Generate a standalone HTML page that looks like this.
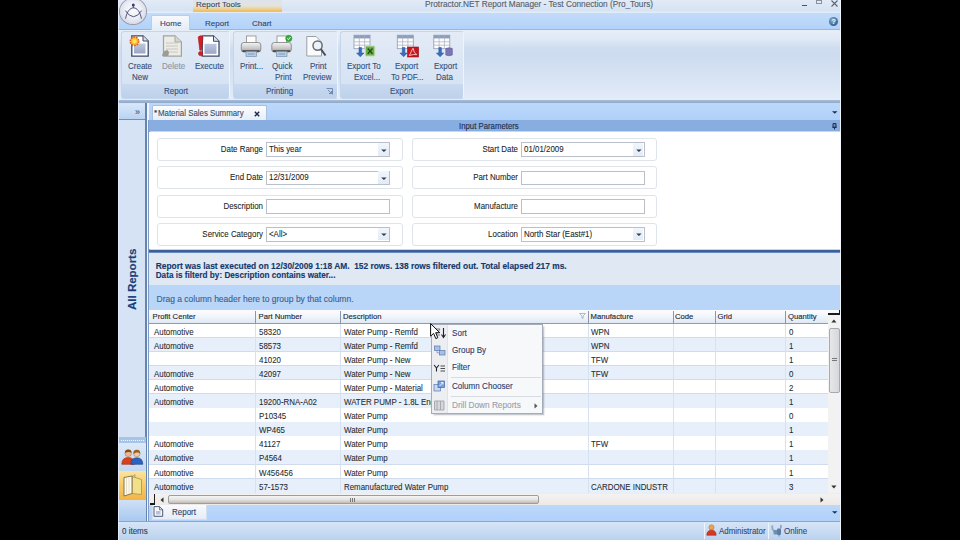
<!DOCTYPE html>
<html><head><meta charset="utf-8">
<style>
*{margin:0;padding:0;box-sizing:border-box}
html,body{width:960px;height:540px;overflow:hidden;background:#000}
body{position:relative;font-family:"Liberation Sans",sans-serif;font-size:8px;color:#1e2a3c}
.a{position:absolute}
.t{position:absolute;white-space:nowrap;line-height:1;-webkit-text-stroke:.12px currentColor}
#win{position:absolute;left:118px;top:0;width:723px;height:540px;background:#c4d8f2;overflow:hidden}
</style></head><body>
<div id="win">
  <!-- title bar -->
  <div class="a" style="left:0;top:0;width:723px;height:13px;background:linear-gradient(#e2ebf6,#d6e3f3 80%,#e6eef8)"></div>
  <!-- tab row -->
  <div class="a" style="left:0;top:13px;width:723px;height:17px;background:linear-gradient(#c2dbf9,#b2d2f9)"></div>
  <div class="a" style="left:0;top:29px;width:723px;height:1px;background:#99b6dc"></div>

  <!-- logo -->
  <div class="a" style="left:2px;top:-1.5px;width:25.5px;height:25.5px;border-radius:50%;background:radial-gradient(circle at 50% 45%,#fbfbfe 0,#eceef6 45%,#d2d5e2 80%,#b4b8c6 100%);box-shadow:0 0 0 1px #959aa6"></div>
  <svg class="a" style="left:0;top:0" width="32" height="28" viewBox="0 0 32 28"><circle cx="15.3" cy="5" r="1.5" fill="#3b3f66"/><path d="M15.3 5.5 V8.2 M7.6 18.7 C10 4.2 21 4.2 23.4 18.7 M7.3 10.6 Q15.5 22.8 23.7 10.6" stroke="#484b74" stroke-width="0.95" fill="none"/></svg>
  <!-- report tools contextual -->
  <div class="a" style="left:75px;top:0;width:89px;height:12px;background:linear-gradient(#dde3ea 0,#e2e4e2 45%,#ead8b0 65%,#f2c56c 85%,#eebc58 100%)"></div>
  <div class="t" style="left:78px;top:1px;font-size:8px;color:#3a475a">Report Tools</div>
  <div class="t" style="left:307px;top:1px;font-size:8.25px;color:#56606e">Protractor.NET Report Manager - Test Connection (Pro_Tours)</div>
  <!-- window controls -->
  <div class="a" style="left:684px;top:5px;width:5px;height:1.2px;background:#4a5264"></div>
  <div class="a" style="left:698px;top:0px;width:6px;height:4px;border:1px solid #8a909c;border-top-width:1.5px;background:#e6ecf4"></div>
  <svg class="a" style="left:713px;top:0px" width="7" height="7" viewBox="0 0 7 7"><path d="M0.5 0.5 L6.5 6.5 M6.5 0.5 L0.5 6.5" stroke="#5c6472" stroke-width="1.1"/></svg>
  <!-- tabs -->
  <div class="a" style="left:33px;top:15px;width:39px;height:15px;background:linear-gradient(#f6f9fd,#e4ecf6);border:1px solid #b8cde8;border-bottom:none;border-radius:2px 2px 0 0"></div>
  <div class="t" style="left:42px;top:19.5px;color:#314870">Home</div>
  <div class="t" style="left:87px;top:19.5px;color:#314870">Report</div>
  <div class="t" style="left:134px;top:19.5px;color:#314870">Chart</div>
  <div class="a" style="left:711px;top:17px;width:9px;height:9px;border-radius:50%;background:radial-gradient(circle at 40% 35%,#8ab0d4,#3a6896 65%,#2a5078)"></div>
  <div class="t" style="left:713.5px;top:18px;font-size:7px;font-weight:bold;color:#e8f0f8">?</div>
  <!-- ribbon -->
  <div class="a" style="left:0;top:30px;width:723px;height:71px;background:linear-gradient(#e6eef8 0,#e0e9f5 9px,#d0ddf0 18px,#cedcf0 35%,#d8e4f4 70%,#e4edf8 100%)"></div>
  <div class="a" style="left:0;top:100px;width:723px;height:3px;background:linear-gradient(#a8bcd6,#8ea9cc)"></div>
  <div class="a" style="left:3px;top:31px;width:109px;height:68px;border:1px solid #c5d5ea;border-right-color:#eef4fb;border-radius:3px;background:linear-gradient(#e3ebf6,#d9e5f4 60%,#d3e1f2)"></div>
  <div class="a" style="left:4px;top:84px;width:107px;height:14px;background:linear-gradient(#c9daf0,#bcd1ec);border-radius:0 0 2px 2px"></div>
  <div class="t" style="left:45.5px;top:86.92px;font-size:8.8px;transform:scaleX(.91);transform-origin:0 0;color:#34507a">Report</div>
  <div class="a" style="left:115px;top:31px;width:105px;height:68px;border:1px solid #c5d5ea;border-right-color:#eef4fb;border-radius:3px;background:linear-gradient(#e3ebf6,#d9e5f4 60%,#d3e1f2)"></div>
  <div class="a" style="left:116px;top:84px;width:103px;height:14px;background:linear-gradient(#c9daf0,#bcd1ec);border-radius:0 0 2px 2px"></div>
  <div class="t" style="left:148px;top:86.92px;font-size:8.8px;transform:scaleX(.91);transform-origin:0 0;color:#34507a">Printing</div>
  <div class="a" style="left:222px;top:31px;width:124px;height:68px;border:1px solid #c5d5ea;border-right-color:#eef4fb;border-radius:3px;background:linear-gradient(#e3ebf6,#d9e5f4 60%,#d3e1f2)"></div>
  <div class="a" style="left:223px;top:84px;width:122px;height:14px;background:linear-gradient(#c9daf0,#bcd1ec);border-radius:0 0 2px 2px"></div>
  <div class="t" style="left:272px;top:86.92px;font-size:8.8px;transform:scaleX(.91);transform-origin:0 0;color:#34507a">Export</div>
  <div class="t" style="left:10px;top:62.42px;font-size:8.8px;transform:scaleX(.91);transform-origin:0 0;color:#34507a">Create</div>
  <div class="t" style="left:14px;top:73.42px;font-size:8.8px;transform:scaleX(.91);transform-origin:0 0;color:#34507a">New</div>
  <div class="t" style="left:43.5px;top:62.42px;font-size:8.8px;transform:scaleX(.91);transform-origin:0 0;color:#8d96a4">Delete</div>
  <div class="t" style="left:76.5px;top:62.42px;font-size:8.8px;transform:scaleX(.91);transform-origin:0 0;color:#34507a">Execute</div>
  <div class="t" style="left:122px;top:62.42px;font-size:8.8px;transform:scaleX(.91);transform-origin:0 0;color:#34507a">Print...</div>
  <div class="t" style="left:154px;top:62.42px;font-size:8.8px;transform:scaleX(.91);transform-origin:0 0;color:#34507a">Quick</div>
  <div class="t" style="left:157px;top:73.42px;font-size:8.8px;transform:scaleX(.91);transform-origin:0 0;color:#34507a">Print</div>
  <div class="t" style="left:192px;top:62.42px;font-size:8.8px;transform:scaleX(.91);transform-origin:0 0;color:#34507a">Print</div>
  <div class="t" style="left:185px;top:73.42px;font-size:8.8px;transform:scaleX(.91);transform-origin:0 0;color:#34507a">Preview</div>
  <div class="t" style="left:229px;top:62.42px;font-size:8.8px;transform:scaleX(.91);transform-origin:0 0;color:#34507a">Export To</div>
  <div class="t" style="left:236px;top:73.42px;font-size:8.8px;transform:scaleX(.91);transform-origin:0 0;color:#34507a">Excel...</div>
  <div class="t" style="left:277px;top:62.42px;font-size:8.8px;transform:scaleX(.91);transform-origin:0 0;color:#34507a">Export</div>
  <div class="t" style="left:273px;top:73.42px;font-size:8.8px;transform:scaleX(.91);transform-origin:0 0;color:#34507a">To PDF...</div>
  <div class="t" style="left:315.5px;top:62.42px;font-size:8.8px;transform:scaleX(.91);transform-origin:0 0;color:#34507a">Export</div>
  <div class="t" style="left:318px;top:73.42px;font-size:8.8px;transform:scaleX(.91);transform-origin:0 0;color:#34507a">Data</div>
  <svg class="a" style="left:208px;top:88px" width="7" height="7"><path d="M0.5 0.5 H6.5 V6.5 M2 2 L5.5 5.5 M5.5 3 V5.5 H3" stroke="#6a82a6" stroke-width="0.9" fill="none"/></svg>
  <!-- ribbon icons -->
  <svg class="a" style="left:0;top:0" width="723" height="100" viewBox="0 0 723 100">
    <defs>
      <linearGradient id="prn" x1="0" y1="0" x2="0" y2="1"><stop offset="0" stop-color="#f4f4f4"/><stop offset="0.6" stop-color="#c9c9c9"/><stop offset="1" stop-color="#9a9a9a"/></linearGradient>
      <linearGradient id="inner" x1="0" y1="0" x2="0" y2="1"><stop offset="0" stop-color="#c0c8e0"/><stop offset="1" stop-color="#9aa6c8"/></linearGradient>
    </defs>
    <!-- create new -->
    <path d="M13.8 35.8 H25 L30.2 41 V56.2 H13.8 Z" fill="#fff" stroke="#3e4a64" stroke-width="1.3"/>
    <path d="M25 35.8 V41 H30.2" fill="#d8deea" stroke="#3e4a64" stroke-width="1"/>
    <rect x="16" y="43.5" width="11.5" height="10" fill="url(#inner)"/>
    <circle cx="16.5" cy="41.3" r="4.2" fill="#f6c22a" stroke="#e0601c" stroke-width="1.6" stroke-dasharray="1.6 1"/>
    <circle cx="16.5" cy="41.3" r="2" fill="#ffe060"/>
    <!-- delete -->
    <path d="M45.5 35.8 H57 L63.4 42 V56.2 H45.5 Z" fill="#ecebe6" stroke="#a3a39c" stroke-width="1.2"/>
    <path d="M57 35.8 V42 H63.4" fill="#d6d5cf" stroke="#a3a39c" stroke-width="0.9"/>
    <path d="M48 43 H60 M48 46 H60 M48 49 H60 M48 52 H60" stroke="#c4c3bc" stroke-width="0.9"/>
    <path d="M44 56 Q45 50 49.5 50 Q52 52 50 56 Z" fill="#9c9c94"/>
    <!-- execute -->
    <path d="M84.3 35.8 H95.5 L101 41.3 V56.2 H84.3 Z" fill="#fff" stroke="#3e4a64" stroke-width="1.3"/>
    <path d="M95.5 35.8 V41.3 H101" fill="#d8deea" stroke="#3e4a64" stroke-width="1"/>
    <rect x="86.5" y="43.8" width="12" height="10" fill="url(#inner)"/>
    <path d="M80.2 37 Q82.5 34.5 85 37 L83.4 50.2 H81.8 Z" fill="#d81e22" stroke="#a8141a" stroke-width="0.6"/>
    <circle cx="82.6" cy="53.6" r="2.1" fill="#d81e22" stroke="#a8141a" stroke-width="0.6"/>
    <!-- print -->
    <g id="printer">
    <rect x="128.5" y="36" width="9.5" height="8" fill="#fdfdfd" stroke="#8c8c8c" stroke-width="0.8"/>
    <rect x="123.3" y="42.5" width="19.5" height="9.5" rx="2.5" fill="url(#prn)" stroke="#7c7c7c" stroke-width="0.8"/>
    <rect x="124.5" y="50.2" width="17" height="1.8" fill="#4a4a4a"/>
    <rect x="128" y="51.5" width="10.5" height="5" fill="#b4cce4" stroke="#7890b0" stroke-width="0.7"/>
    <path d="M130 54 H136.5" stroke="#6c88ac" stroke-width="0.7"/>
    </g>
    <use href="#printer" x="30.5"/>
    <circle cx="170.8" cy="38.4" r="3.1" fill="#3aa83e" stroke="#2b8a2e" stroke-width="0.6"/>
    <path d="M169.2 38.4 L170.5 39.7 L172.5 37" stroke="#fff" stroke-width="0.9" fill="none"/>
    <!-- print preview -->
    <path d="M188.8 36.5 H198 L203.5 42 V56 H188.8 Z" fill="#fbfbfc" stroke="#9aa0a8" stroke-width="1"/>
    <circle cx="199.6" cy="45.6" r="4.6" fill="#e4edf6" fill-opacity="0.6" stroke="#6a7078" stroke-width="1.5"/>
    <path d="M202.8 49 L207.5 55.5" stroke="#4a5058" stroke-width="2.1"/>
    <!-- export grids -->
    <g id="grid">
    <rect x="236" y="35.2" width="16" height="13.5" fill="#fdfdfd" stroke="#8c9ab4" stroke-width="0.8"/>
    <rect x="236" y="35.2" width="16" height="3.2" fill="#8f9db9"/>
    <path d="M236 41.8 H252 M236 45.2 H252 M241.3 35.2 V48.7 M246.6 35.2 V48.7" stroke="#a4aec4" stroke-width="0.7"/>
    <path d="M241 47.5 V53 H238.6 L242.3 56.8 L246 53 H243.6 V47.5 Z" fill="#3a6cc0" stroke="#26509a" stroke-width="0.5"/>
    </g>
    <rect x="247.3" y="46" width="9.5" height="10" rx="1" fill="#6fae4a" stroke="#bfe0a8" stroke-width="1"/>
    <path d="M249.8 48.5 L254.5 53.8 M254.5 48.5 L249.8 53.8" stroke="#1f4f1a" stroke-width="1.4"/>
    <use href="#grid" x="43.3"/>
    <rect x="289.6" y="47" width="11" height="10" fill="#c8161c" stroke="#901014" stroke-width="0.6"/>
    <path d="M291.3 55.5 Q293.5 51.5 294.6 48.6 Q295.3 47.6 295.4 49 Q295 52 298.8 54.6 Q296 54 291.3 55.5" fill="none" stroke="#fbe0e0" stroke-width="0.8"/>
    <use href="#grid" x="79.8"/>
    <path d="M327.8 48.5 Q331 47 334.3 48.5 V55 Q331 56.5 327.8 55 Z" fill="#7d76b4" stroke="#5a5490" stroke-width="0.6"/>
  </svg>
  <!-- tab strip -->
  <div class="a" style="left:31px;top:103px;width:692px;height:17px;background:linear-gradient(#bcd8fb,#b0d0f8)"></div>
  <!-- nav pane -->
  <div class="a" style="left:1px;top:103px;width:27px;height:418px;background:#d5e3f4"></div>
  <div class="a" style="left:1px;top:103.5px;width:27px;height:16.5px;background:linear-gradient(#d8e7f9,#b9d3f3);border-bottom:1.3px solid #7290bc"></div>
  <div class="a" style="left:27.2px;top:103px;width:1.6px;height:418px;background:#6584b0"></div>
  <div class="a" style="left:29px;top:103px;width:1.5px;height:418px;background:#f0f5fb"></div><div class="a" style="left:30.3px;top:120px;width:1.3px;height:401px;background:#7f9cc6"></div>
  <!-- input parameters header -->
  <div class="a" style="left:31px;top:120.2px;width:692px;height:11px;background:#88ade0"></div>
  <!-- form -->
  <div class="a" style="left:31px;top:132px;width:692px;height:117px;background:#fff"></div>
  <div class="a" style="left:31px;top:249.5px;width:692px;height:4.3px;background:linear-gradient(#3e6098 0,#3e6098 1.7px,#6a8cc0 2px,#5a7eb6 4.3px)"></div>
  <!-- report info -->
  <div class="a" style="left:31px;top:253px;width:692px;height:32px;background:#dfe8f3"></div>
  <!-- group by -->
  <div class="a" style="left:31px;top:285px;width:692px;height:25px;background:#b9d6f9"></div>
  <!-- grid header -->
  <div class="a" style="left:31px;top:309.5px;width:679px;height:14px;background:linear-gradient(#fbfcfe,#f1f5fa 50%,#dfe8f4);border-bottom:1px solid #8a9bb4"></div>
  <div class="a" style="left:31px;top:323.50px;width:679px;height:14.1px;background:#ffffff"></div>
  <div class="a" style="left:31px;top:337.00px;width:679px;height:1.8px;background:#d0dcec"></div>
  <div class="a" style="left:31px;top:337.60px;width:679px;height:14.1px;background:#e7effa"></div>
  <div class="a" style="left:31px;top:351.10px;width:679px;height:1.8px;background:#d0dcec"></div>
  <div class="a" style="left:31px;top:351.70px;width:679px;height:14.1px;background:#ffffff"></div>
  <div class="a" style="left:31px;top:365.20px;width:679px;height:1.8px;background:#d0dcec"></div>
  <div class="a" style="left:31px;top:365.80px;width:679px;height:14.1px;background:#e7effa"></div>
  <div class="a" style="left:31px;top:379.30px;width:679px;height:1.8px;background:#d0dcec"></div>
  <div class="a" style="left:31px;top:379.90px;width:679px;height:14.1px;background:#ffffff"></div>
  <div class="a" style="left:31px;top:393.40px;width:679px;height:1.8px;background:#d0dcec"></div>
  <div class="a" style="left:31px;top:394.00px;width:679px;height:14.1px;background:#e7effa"></div>
  <div class="a" style="left:31px;top:407.50px;width:679px;height:1.8px;background:#d0dcec"></div>
  <div class="a" style="left:31px;top:408.10px;width:679px;height:14.1px;background:#ffffff"></div>
  <div class="a" style="left:31px;top:421.60px;width:679px;height:1.8px;background:#d0dcec"></div>
  <div class="a" style="left:31px;top:422.20px;width:679px;height:14.1px;background:#e7effa"></div>
  <div class="a" style="left:31px;top:435.70px;width:679px;height:1.8px;background:#d0dcec"></div>
  <div class="a" style="left:31px;top:436.30px;width:679px;height:14.1px;background:#ffffff"></div>
  <div class="a" style="left:31px;top:449.80px;width:679px;height:1.8px;background:#d0dcec"></div>
  <div class="a" style="left:31px;top:450.40px;width:679px;height:14.1px;background:#e7effa"></div>
  <div class="a" style="left:31px;top:463.90px;width:679px;height:1.8px;background:#d0dcec"></div>
  <div class="a" style="left:31px;top:464.50px;width:679px;height:14.1px;background:#ffffff"></div>
  <div class="a" style="left:31px;top:478.00px;width:679px;height:1.8px;background:#d0dcec"></div>
  <div class="a" style="left:31px;top:478.60px;width:679px;height:14.1px;background:#e7effa"></div>
  
  <div class="a" style="left:137.2px;top:323.5px;width:1px;height:170px;background:#d6e2f2"></div>
  <div class="a" style="left:137.2px;top:311px;width:1px;height:12.5px;background:#8897ad"></div>
  <div class="a" style="left:222.1px;top:323.5px;width:1px;height:170px;background:#d6e2f2"></div>
  <div class="a" style="left:222.1px;top:311px;width:1px;height:12.5px;background:#8897ad"></div>
  <div class="a" style="left:469.5px;top:323.5px;width:1px;height:170px;background:#d6e2f2"></div>
  <div class="a" style="left:469.5px;top:311px;width:1px;height:12.5px;background:#8897ad"></div>
  <div class="a" style="left:554.5px;top:323.5px;width:1px;height:170px;background:#d6e2f2"></div>
  <div class="a" style="left:554.5px;top:311px;width:1px;height:12.5px;background:#8897ad"></div>
  <div class="a" style="left:596.7px;top:323.5px;width:1px;height:170px;background:#d6e2f2"></div>
  <div class="a" style="left:596.7px;top:311px;width:1px;height:12.5px;background:#8897ad"></div>
  <div class="a" style="left:667px;top:323.5px;width:1px;height:170px;background:#d6e2f2"></div>
  <div class="a" style="left:667px;top:311px;width:1px;height:12.5px;background:#8897ad"></div>
  <div class="t" style="left:34.5px;top:313px;font-size:7.7px;color:#1e2530">Profit Center</div>
  <div class="t" style="left:140.5px;top:313px;font-size:7.7px;color:#1e2530">Part Number</div>
  <div class="t" style="left:225px;top:313px;font-size:7.7px;color:#1e2530">Description</div>
  <div class="t" style="left:472.5px;top:313px;font-size:7.7px;color:#1e2530">Manufacture</div>
  <div class="t" style="left:557px;top:313px;font-size:7.7px;color:#1e2530">Code</div>
  <div class="t" style="left:599.5px;top:313px;font-size:7.7px;color:#1e2530">Grid</div>
  <div class="t" style="left:670px;top:313px;font-size:7.7px;color:#1e2530">Quantity</div>
  <svg class="a" style="left:461px;top:313px" width="7" height="6"><path d="M0.5 0.5 H6.5 L4 3 V5.5 L3 5 V3 Z" fill="none" stroke="#a0a8b4" stroke-width="0.8"/></svg>
  <div class="t" style="left:36px;top:327.50px;font-size:8.6px;transform:scaleX(.92);-webkit-text-stroke:.08px currentColor;transform-origin:0 0;color:#262a30">Automotive</div>
  <div class="t" style="left:141.4px;top:327.50px;font-size:8.6px;transform:scaleX(.92);-webkit-text-stroke:.08px currentColor;transform-origin:0 0;color:#262a30">58320</div>
  <div class="t" style="left:225.75px;top:327.50px;font-size:8.6px;transform:scaleX(.92);-webkit-text-stroke:.08px currentColor;transform-origin:0 0;color:#262a30">Water Pump - Remfd</div>
  <div class="t" style="left:473px;top:327.50px;font-size:8.6px;transform:scaleX(.92);-webkit-text-stroke:.08px currentColor;transform-origin:0 0;color:#262a30">WPN</div>
  <div class="t" style="left:671px;top:327.50px;font-size:8.6px;transform:scaleX(.92);-webkit-text-stroke:.08px currentColor;transform-origin:0 0;color:#262a30">0</div>
  <div class="t" style="left:36px;top:341.60px;font-size:8.6px;transform:scaleX(.92);-webkit-text-stroke:.08px currentColor;transform-origin:0 0;color:#262a30">Automotive</div>
  <div class="t" style="left:141.4px;top:341.60px;font-size:8.6px;transform:scaleX(.92);-webkit-text-stroke:.08px currentColor;transform-origin:0 0;color:#262a30">58573</div>
  <div class="t" style="left:225.75px;top:341.60px;font-size:8.6px;transform:scaleX(.92);-webkit-text-stroke:.08px currentColor;transform-origin:0 0;color:#262a30">Water Pump - Remfd</div>
  <div class="t" style="left:473px;top:341.60px;font-size:8.6px;transform:scaleX(.92);-webkit-text-stroke:.08px currentColor;transform-origin:0 0;color:#262a30">WPN</div>
  <div class="t" style="left:671px;top:341.60px;font-size:8.6px;transform:scaleX(.92);-webkit-text-stroke:.08px currentColor;transform-origin:0 0;color:#262a30">1</div>
  <div class="t" style="left:141.4px;top:355.70px;font-size:8.6px;transform:scaleX(.92);-webkit-text-stroke:.08px currentColor;transform-origin:0 0;color:#262a30">41020</div>
  <div class="t" style="left:225.75px;top:355.70px;font-size:8.6px;transform:scaleX(.92);-webkit-text-stroke:.08px currentColor;transform-origin:0 0;color:#262a30">Water Pump - New</div>
  <div class="t" style="left:473px;top:355.70px;font-size:8.6px;transform:scaleX(.92);-webkit-text-stroke:.08px currentColor;transform-origin:0 0;color:#262a30">TFW</div>
  <div class="t" style="left:671px;top:355.70px;font-size:8.6px;transform:scaleX(.92);-webkit-text-stroke:.08px currentColor;transform-origin:0 0;color:#262a30">1</div>
  <div class="t" style="left:36px;top:369.80px;font-size:8.6px;transform:scaleX(.92);-webkit-text-stroke:.08px currentColor;transform-origin:0 0;color:#262a30">Automotive</div>
  <div class="t" style="left:141.4px;top:369.80px;font-size:8.6px;transform:scaleX(.92);-webkit-text-stroke:.08px currentColor;transform-origin:0 0;color:#262a30">42097</div>
  <div class="t" style="left:225.75px;top:369.80px;font-size:8.6px;transform:scaleX(.92);-webkit-text-stroke:.08px currentColor;transform-origin:0 0;color:#262a30">Water Pump - New</div>
  <div class="t" style="left:473px;top:369.80px;font-size:8.6px;transform:scaleX(.92);-webkit-text-stroke:.08px currentColor;transform-origin:0 0;color:#262a30">TFW</div>
  <div class="t" style="left:671px;top:369.80px;font-size:8.6px;transform:scaleX(.92);-webkit-text-stroke:.08px currentColor;transform-origin:0 0;color:#262a30">0</div>
  <div class="t" style="left:36px;top:383.90px;font-size:8.6px;transform:scaleX(.92);-webkit-text-stroke:.08px currentColor;transform-origin:0 0;color:#262a30">Automotive</div>
  <div class="t" style="left:225.75px;top:383.90px;font-size:8.6px;transform:scaleX(.92);-webkit-text-stroke:.08px currentColor;transform-origin:0 0;color:#262a30">Water Pump - Material</div>
  <div class="t" style="left:671px;top:383.90px;font-size:8.6px;transform:scaleX(.92);-webkit-text-stroke:.08px currentColor;transform-origin:0 0;color:#262a30">2</div>
  <div class="t" style="left:36px;top:398.00px;font-size:8.6px;transform:scaleX(.92);-webkit-text-stroke:.08px currentColor;transform-origin:0 0;color:#262a30">Automotive</div>
  <div class="t" style="left:141.4px;top:398.00px;font-size:8.6px;transform:scaleX(.92);-webkit-text-stroke:.08px currentColor;transform-origin:0 0;color:#262a30">19200-RNA-A02</div>
  <div class="t" style="left:225.75px;top:398.00px;font-size:8.6px;transform:scaleX(.92);-webkit-text-stroke:.08px currentColor;transform-origin:0 0;color:#262a30">WATER PUMP - 1.8L Engine</div>
  <div class="t" style="left:671px;top:398.00px;font-size:8.6px;transform:scaleX(.92);-webkit-text-stroke:.08px currentColor;transform-origin:0 0;color:#262a30">1</div>
  <div class="t" style="left:141.4px;top:412.10px;font-size:8.6px;transform:scaleX(.92);-webkit-text-stroke:.08px currentColor;transform-origin:0 0;color:#262a30">P10345</div>
  <div class="t" style="left:225.75px;top:412.10px;font-size:8.6px;transform:scaleX(.92);-webkit-text-stroke:.08px currentColor;transform-origin:0 0;color:#262a30">Water Pump</div>
  <div class="t" style="left:671px;top:412.10px;font-size:8.6px;transform:scaleX(.92);-webkit-text-stroke:.08px currentColor;transform-origin:0 0;color:#262a30">0</div>
  <div class="t" style="left:141.4px;top:426.20px;font-size:8.6px;transform:scaleX(.92);-webkit-text-stroke:.08px currentColor;transform-origin:0 0;color:#262a30">WP465</div>
  <div class="t" style="left:225.75px;top:426.20px;font-size:8.6px;transform:scaleX(.92);-webkit-text-stroke:.08px currentColor;transform-origin:0 0;color:#262a30">Water Pump</div>
  <div class="t" style="left:671px;top:426.20px;font-size:8.6px;transform:scaleX(.92);-webkit-text-stroke:.08px currentColor;transform-origin:0 0;color:#262a30">1</div>
  <div class="t" style="left:36px;top:440.30px;font-size:8.6px;transform:scaleX(.92);-webkit-text-stroke:.08px currentColor;transform-origin:0 0;color:#262a30">Automotive</div>
  <div class="t" style="left:141.4px;top:440.30px;font-size:8.6px;transform:scaleX(.92);-webkit-text-stroke:.08px currentColor;transform-origin:0 0;color:#262a30">41127</div>
  <div class="t" style="left:225.75px;top:440.30px;font-size:8.6px;transform:scaleX(.92);-webkit-text-stroke:.08px currentColor;transform-origin:0 0;color:#262a30">Water Pump</div>
  <div class="t" style="left:473px;top:440.30px;font-size:8.6px;transform:scaleX(.92);-webkit-text-stroke:.08px currentColor;transform-origin:0 0;color:#262a30">TFW</div>
  <div class="t" style="left:671px;top:440.30px;font-size:8.6px;transform:scaleX(.92);-webkit-text-stroke:.08px currentColor;transform-origin:0 0;color:#262a30">1</div>
  <div class="t" style="left:36px;top:454.40px;font-size:8.6px;transform:scaleX(.92);-webkit-text-stroke:.08px currentColor;transform-origin:0 0;color:#262a30">Automotive</div>
  <div class="t" style="left:141.4px;top:454.40px;font-size:8.6px;transform:scaleX(.92);-webkit-text-stroke:.08px currentColor;transform-origin:0 0;color:#262a30">P4564</div>
  <div class="t" style="left:225.75px;top:454.40px;font-size:8.6px;transform:scaleX(.92);-webkit-text-stroke:.08px currentColor;transform-origin:0 0;color:#262a30">Water Pump</div>
  <div class="t" style="left:671px;top:454.40px;font-size:8.6px;transform:scaleX(.92);-webkit-text-stroke:.08px currentColor;transform-origin:0 0;color:#262a30">1</div>
  <div class="t" style="left:36px;top:468.50px;font-size:8.6px;transform:scaleX(.92);-webkit-text-stroke:.08px currentColor;transform-origin:0 0;color:#262a30">Automotive</div>
  <div class="t" style="left:141.4px;top:468.50px;font-size:8.6px;transform:scaleX(.92);-webkit-text-stroke:.08px currentColor;transform-origin:0 0;color:#262a30">W456456</div>
  <div class="t" style="left:225.75px;top:468.50px;font-size:8.6px;transform:scaleX(.92);-webkit-text-stroke:.08px currentColor;transform-origin:0 0;color:#262a30">Water Pump</div>
  <div class="t" style="left:671px;top:468.50px;font-size:8.6px;transform:scaleX(.92);-webkit-text-stroke:.08px currentColor;transform-origin:0 0;color:#262a30">1</div>
  <div class="t" style="left:36px;top:482.60px;font-size:8.6px;transform:scaleX(.92);-webkit-text-stroke:.08px currentColor;transform-origin:0 0;color:#262a30">Automotive</div>
  <div class="t" style="left:141.4px;top:482.60px;font-size:8.6px;transform:scaleX(.92);-webkit-text-stroke:.08px currentColor;transform-origin:0 0;color:#262a30">57-1573</div>
  <div class="t" style="left:225.75px;top:482.60px;font-size:8.6px;transform:scaleX(.92);-webkit-text-stroke:.08px currentColor;transform-origin:0 0;color:#262a30">Remanufactured Water Pump</div>
  <div class="t" style="left:473px;top:482.60px;font-size:8.6px;transform:scaleX(.92);-webkit-text-stroke:.08px currentColor;transform-origin:0 0;color:#262a30">CARDONE INDUSTR</div>
  <div class="t" style="left:671px;top:482.60px;font-size:8.6px;transform:scaleX(.92);-webkit-text-stroke:.08px currentColor;transform-origin:0 0;color:#262a30">3</div>
  <!-- v scrollbar -->
  <div class="a" style="left:710px;top:314px;width:13px;height:179.5px;background:#f2f2f3"></div>
  <div class="a" style="left:710px;top:309.5px;width:13px;height:4.5px;background:linear-gradient(#fbfcfe,#f1f5fa)"></div>
  <div class="a" style="left:710px;top:313.4px;width:12px;height:1.3px;background:#1a1a1a"></div>
  <div class="a" style="left:720.6px;top:310.2px;width:1.3px;height:4.5px;background:#1a1a1a"></div>
  <svg class="a" style="left:713px;top:319px" width="6" height="4"><path d="M0.3 3.5 H5.5 L2.9 0.5 Z" fill="#333"/></svg>
  <div class="a" style="left:711px;top:327.5px;width:10.5px;height:65.5px;border:1px solid #a6a9ae;border-radius:2px;background:linear-gradient(90deg,#e6e7e9,#d5d7da)"></div>
  <div class="a" style="left:714px;top:357.5px;width:4.5px;height:4.8px;background:repeating-linear-gradient(#777 0,#777 0.8px,transparent 0.8px,transparent 2px)"></div>
  <svg class="a" style="left:713px;top:485px" width="6" height="4"><path d="M0.3 0.5 H5.5 L2.9 3.5 Z" fill="#333"/></svg>
  <!-- h scrollbar -->
  <div class="a" style="left:31px;top:493px;width:692px;height:12px;background:linear-gradient(#e8ebef 0,#f4f2f0 1.5px,#ece9e6)"></div>
  <div class="a" style="left:35.8px;top:493.5px;width:1.3px;height:11px;background:#1a1a1a"></div>
  <div class="a" style="left:32px;top:503.3px;width:5px;height:1.3px;background:#1a1a1a"></div>
  <svg class="a" style="left:41.5px;top:497px" width="4" height="6"><path d="M3.5 0.3 V5.5 L0.5 2.9 Z" fill="#333"/></svg>
  <div class="a" style="left:49.7px;top:494.6px;width:371px;height:9.8px;border:1px solid #9a9da2;border-radius:2px;background:linear-gradient(#f6f6f6,#e6e4e1 50%,#c0bcb8)"></div>
  <div class="a" style="left:232px;top:497.5px;width:4.8px;height:4px;background:repeating-linear-gradient(90deg,#777 0,#777 0.8px,transparent 0.8px,transparent 2px)"></div>
  <svg class="a" style="left:702px;top:497px" width="4" height="6"><path d="M0.5 0.3 V5.5 L3.5 2.9 Z" fill="#333"/></svg>
  <!-- bottom tab strip -->
  <div class="a" style="left:31px;top:505px;width:692px;height:16px;background:linear-gradient(#bcd8fa,#b1d1fa)"></div>
  <div class="a" style="left:34.4px;top:505px;width:54.5px;height:14.7px;background:linear-gradient(#f7fafd,#e6edf7);border:1px solid #d3dfee;border-top:none"></div>
  <svg class="a" style="left:35px;top:506.3px" width="11" height="11"><path d="M1 0.6 H6.5 L9.7 3.8 V10.3 H1 Z" fill="#f4f6fa" stroke="#3e4a64" stroke-width="0.9"/><path d="M6.5 0.6 V3.8 H9.7" fill="none" stroke="#3e4a64" stroke-width="0.7"/><rect x="3" y="5" width="4.5" height="3.5" fill="#b8c0d8"/></svg>
  <div class="t" style="left:54.2px;top:507.5px;font-size:8.6px;transform:scaleX(.93);transform-origin:0 0;color:#2b4270">Report</div>
  <svg class="a" style="left:713.5px;top:510.5px" width="6" height="3"><path d="M0 0.2 H5.5 L2.75 2.8 Z" fill="#1e2e4c"/></svg>
  <div class="a" style="left:0;top:520.5px;width:723px;height:1.5px;background:#8ea6c6"></div>
  <!-- status bar -->
  <div class="a" style="left:0;top:522px;width:723px;height:18px;background:linear-gradient(#d6e5f7,#c6daf2 60%,#bad1ef)"></div>
  <div class="t" style="left:4px;top:527px;font-size:8.6px;transform:scaleX(.93);transform-origin:0 0;color:#2c3c5c">0 items</div>
  <div class="a" style="left:586px;top:523px;width:1px;height:16px;background:#eef5fd"></div>
  <div class="a" style="left:650px;top:523px;width:1px;height:16px;background:#eef5fd"></div>
  <svg class="a" style="left:588px;top:524px" width="11" height="12"><circle cx="5.5" cy="3.4" r="2.6" fill="#f1a24a" stroke="#c06a20" stroke-width="0.5"/><path d="M0.8 11.3 Q0.8 6.2 5.5 6.2 Q10.2 6.2 10.2 11.3 Z" fill="#d8361e" stroke="#a02010" stroke-width="0.5"/></svg>
  <div class="t" style="left:601px;top:527px;font-size:8.6px;transform:scaleX(.92);transform-origin:0 0;color:#34487a">Administrator</div>
  <svg class="a" style="left:653px;top:524px" width="12" height="13"><path d="M1.5 1.5 Q0.5 6 3.5 7.5" stroke="#8aa8c4" stroke-width="1.8" fill="none"/><rect x="2.5" y="6" width="4" height="4.5" rx="1" fill="#6f8fb0"/><rect x="6" y="4.5" width="4" height="6.5" rx="1.2" fill="#5c7ea2"/><path d="M8 11 V12.5 M9.5 1 Q11 3 9 4.5" stroke="#7e9cba" stroke-width="1.3" fill="none"/></svg>
  <div class="t" style="left:665.5px;top:527px;font-size:8.6px;transform:scaleX(.93);transform-origin:0 0;color:#34487a">Online</div>
  <!-- nav pane contents -->
  <div class="t" style="left:8.7px;top:310px;transform:rotate(-90deg);transform-origin:0 0;font-size:11.5px;font-weight:bold;color:#17407a">All Reports</div>
  <div class="a" style="left:1px;top:437px;width:26.5px;height:6px;background:#a9c3e5"></div>
  <div class="a" style="left:3px;top:439.5px;width:23px;height:1px;background:repeating-linear-gradient(90deg,#f4f8fd 0,#f4f8fd 1px,transparent 1px,transparent 2px)"></div>
  <div class="a" style="left:1px;top:443px;width:26.5px;height:27.5px;background:linear-gradient(#dce9f8,#c2d8f2)"></div>
  <svg class="a" style="left:2px;top:446px" width="25" height="20" viewBox="0 0 25 20"><path d="M1.8 18.3 Q1.8 11.5 8.2 11.5 Q14.5 11.5 14.5 18.3 Z" fill="#d8401e" stroke="#9a2812" stroke-width="0.6"/><circle cx="8.2" cy="7.3" r="3.3" fill="#f0b88a" stroke="#a06a40" stroke-width="0.5"/><path d="M4.9 7 Q5 3.6 8.2 3.6 Q11.5 3.6 11.5 6.8 Q9 5 4.9 7 Z" fill="#8a4a1a"/><path d="M10.8 18.3 Q10.8 11.8 16.8 11.8 Q22.8 11.8 22.8 18.3 Z" fill="#2a62c0" stroke="#1a3a88" stroke-width="0.6"/><circle cx="16.8" cy="7.6" r="3.2" fill="#f4c8a0" stroke="#a07048" stroke-width="0.5"/><path d="M13.5 8 Q13 3.8 16.8 3.8 Q20.5 3.8 20.2 8 Q18 5.2 13.5 8 Z" fill="#9a6020"/></svg>
  <div class="a" style="left:1px;top:470.5px;width:26.5px;height:29px;background:linear-gradient(#fbe4a0,#f8cc68 45%,#f4b444)"></div>
  <svg class="a" style="left:3px;top:472.5px" width="23" height="24" viewBox="0 0 23 24"><path d="M11 3.5 L20.5 6.5 V21.5 L11 20.5 Z" fill="#f0e08a" stroke="#a89050" stroke-width="0.8"/><path d="M3 4.5 L11 3 V20.5 L3 23 Z" fill="#fdfbf0" stroke="#7a6a48" stroke-width="0.9"/><path d="M5.5 5 V21.5 M8 4.3 V21" stroke="#d8d0b0" stroke-width="0.6"/><path d="M11 3.5 L14 1.5 V4.5" fill="none" stroke="#a89050" stroke-width="0.7"/></svg>
  <div class="a" style="left:1px;top:499.5px;width:26.5px;height:21px;background:linear-gradient(#cfe0f6,#a9c9f0)"></div>
  <!-- doc tab & nav header -->
  <div class="t" style="left:17px;top:108px;font-size:9px;color:#3a5a88;letter-spacing:-1px">&#187;</div>
  <div class="a" style="left:33.5px;top:105px;width:115px;height:15px;background:linear-gradient(#fbfdff,#e6eef9);border:1px solid #a9c1e0;border-bottom:none;border-radius:2px 2px 0 0"></div>
  <div class="t" style="left:36px;top:109px;font-size:8px;font-weight:bold;color:#34445c">*</div>
  <div class="t" style="left:40px;top:108.9px;font-size:8.6px;transform:scaleX(.915);transform-origin:0 0;color:#3a4c66">Material Sales Summary</div>
  <svg class="a" style="left:135.7px;top:110.8px" width="6" height="6"><path d="M0.8 0.8 L5.2 5.2 M5.2 0.8 L0.8 5.2" stroke="#1c2a46" stroke-width="1.4"/></svg>
  <svg class="a" style="left:713.5px;top:110.5px" width="6" height="3"><path d="M0 0.2 H5.5 L2.75 2.8 Z" fill="#1e2e4c"/></svg>
  <div class="t" style="left:341px;top:121.6px;font-size:8.8px;transform:scaleX(.885);transform-origin:0 0;color:#1c2c4c">Input Parameters</div>
  <svg class="a" style="left:714px;top:123px" width="5" height="7"><path d="M1 0.6 H4 V4.3 H1 Z M0.3 4.3 H4.7 M2.5 4.3 V6.5" stroke="#1e2e4c" stroke-width="1" fill="#6f90c0"/></svg>
  <div class="a" style="left:39px;top:138px;width:245.5px;height:23px;border:1px solid #dfe4ea;border-radius:3px;background:#fff"></div>
  <div class="t" style="left:24.5px;width:120px;text-align:right;top:144.90px;font-size:8.6px;transform:scaleX(.92);-webkit-text-stroke:.08px currentColor;transform-origin:100% 0;color:#1c1f24">Date Range</div>
  <div class="a" style="left:148px;top:142.4px;width:124px;height:14.5px;border:1px solid #b9c0ca;background:#fff"></div>
  <div class="t" style="left:151px;top:144.90px;font-size:8.6px;transform:scaleX(.92);-webkit-text-stroke:.08px currentColor;transform-origin:0 0;color:#1a1e26">This year</div>
  <div class="a" style="left:260px;top:143px;width:10.5px;height:12.5px;background:linear-gradient(#f2f6fc,#e2ebf7)"></div>
  <svg class="a" style="left:263px;top:148.5px" width="6" height="4"><path d="M0.2 0.6 H5.6 L2.9 3.1 Z" fill="#343a48"/></svg>
  <div class="a" style="left:293.6px;top:138px;width:245.5px;height:23px;border:1px solid #dfe4ea;border-radius:3px;background:#fff"></div>
  <div class="t" style="left:279.5px;width:120px;text-align:right;top:144.90px;font-size:8.6px;transform:scaleX(.92);-webkit-text-stroke:.08px currentColor;transform-origin:100% 0;color:#1c1f24">Start Date</div>
  <div class="a" style="left:402.6px;top:142.4px;width:124px;height:14.5px;border:1px solid #b9c0ca;background:#fff"></div>
  <div class="t" style="left:405.6px;top:144.90px;font-size:8.6px;transform:scaleX(.92);-webkit-text-stroke:.08px currentColor;transform-origin:0 0;color:#1a1e26">01/01/2009</div>
  <div class="a" style="left:514.6px;top:143px;width:10.5px;height:12.5px;background:linear-gradient(#f2f6fc,#e2ebf7)"></div>
  <svg class="a" style="left:517.6px;top:148.5px" width="6" height="4"><path d="M0.2 0.6 H5.6 L2.9 3.1 Z" fill="#343a48"/></svg>
  <div class="a" style="left:39px;top:166.3px;width:245.5px;height:23px;border:1px solid #dfe4ea;border-radius:3px;background:#fff"></div>
  <div class="t" style="left:24.5px;width:120px;text-align:right;top:173.20px;font-size:8.6px;transform:scaleX(.92);-webkit-text-stroke:.08px currentColor;transform-origin:100% 0;color:#1c1f24">End Date</div>
  <div class="a" style="left:148px;top:170.7px;width:124px;height:14.5px;border:1px solid #b9c0ca;background:#fff"></div>
  <div class="t" style="left:151px;top:173.20px;font-size:8.6px;transform:scaleX(.92);-webkit-text-stroke:.08px currentColor;transform-origin:0 0;color:#1a1e26">12/31/2009</div>
  <div class="a" style="left:260px;top:171.3px;width:10.5px;height:12.5px;background:linear-gradient(#f2f6fc,#e2ebf7)"></div>
  <svg class="a" style="left:263px;top:176.8px" width="6" height="4"><path d="M0.2 0.6 H5.6 L2.9 3.1 Z" fill="#343a48"/></svg>
  <div class="a" style="left:293.6px;top:166.3px;width:245.5px;height:23px;border:1px solid #dfe4ea;border-radius:3px;background:#fff"></div>
  <div class="t" style="left:279.5px;width:120px;text-align:right;top:173.20px;font-size:8.6px;transform:scaleX(.92);-webkit-text-stroke:.08px currentColor;transform-origin:100% 0;color:#1c1f24">Part Number</div>
  <div class="a" style="left:402.6px;top:170.7px;width:124px;height:14.5px;border:1px solid #b9c0ca;background:#fff"></div>
  <div class="a" style="left:39px;top:194.6px;width:245.5px;height:23px;border:1px solid #dfe4ea;border-radius:3px;background:#fff"></div>
  <div class="t" style="left:24.5px;width:120px;text-align:right;top:201.50px;font-size:8.6px;transform:scaleX(.92);-webkit-text-stroke:.08px currentColor;transform-origin:100% 0;color:#1c1f24">Description</div>
  <div class="a" style="left:148px;top:199.0px;width:124px;height:14.5px;border:1px solid #b9c0ca;background:#fff"></div>
  <div class="a" style="left:293.6px;top:194.6px;width:245.5px;height:23px;border:1px solid #dfe4ea;border-radius:3px;background:#fff"></div>
  <div class="t" style="left:279.5px;width:120px;text-align:right;top:201.50px;font-size:8.6px;transform:scaleX(.92);-webkit-text-stroke:.08px currentColor;transform-origin:100% 0;color:#1c1f24">Manufacture</div>
  <div class="a" style="left:402.6px;top:199.0px;width:124px;height:14.5px;border:1px solid #b9c0ca;background:#fff"></div>
  <div class="a" style="left:39px;top:222.9px;width:245.5px;height:23px;border:1px solid #dfe4ea;border-radius:3px;background:#fff"></div>
  <div class="t" style="left:24.5px;width:120px;text-align:right;top:229.80px;font-size:8.6px;transform:scaleX(.92);-webkit-text-stroke:.08px currentColor;transform-origin:100% 0;color:#1c1f24">Service Category</div>
  <div class="a" style="left:148px;top:227.3px;width:124px;height:14.5px;border:1px solid #b9c0ca;background:#fff"></div>
  <div class="t" style="left:151px;top:229.80px;font-size:8.6px;transform:scaleX(.92);-webkit-text-stroke:.08px currentColor;transform-origin:0 0;color:#1a1e26">&lt;All&gt;</div>
  <div class="a" style="left:260px;top:227.9px;width:10.5px;height:12.5px;background:linear-gradient(#f2f6fc,#e2ebf7)"></div>
  <svg class="a" style="left:263px;top:233.4px" width="6" height="4"><path d="M0.2 0.6 H5.6 L2.9 3.1 Z" fill="#343a48"/></svg>
  <div class="a" style="left:293.6px;top:222.9px;width:245.5px;height:23px;border:1px solid #dfe4ea;border-radius:3px;background:#fff"></div>
  <div class="t" style="left:279.5px;width:120px;text-align:right;top:229.80px;font-size:8.6px;transform:scaleX(.92);-webkit-text-stroke:.08px currentColor;transform-origin:100% 0;color:#1c1f24">Location</div>
  <div class="a" style="left:402.6px;top:227.3px;width:124px;height:14.5px;border:1px solid #b9c0ca;background:#fff"></div>
  <div class="t" style="left:405.6px;top:229.80px;font-size:8.6px;transform:scaleX(.92);-webkit-text-stroke:.08px currentColor;transform-origin:0 0;color:#1a1e26">North Star (East#1)</div>
  <div class="a" style="left:514.6px;top:227.9px;width:10.5px;height:12.5px;background:linear-gradient(#f2f6fc,#e2ebf7)"></div>
  <svg class="a" style="left:517.6px;top:233.4px" width="6" height="4"><path d="M0.2 0.6 H5.6 L2.9 3.1 Z" fill="#343a48"/></svg>
  <!-- report info -->
  <div class="t" style="left:37.7px;top:262px;font-size:8.4px;font-weight:bold;color:#15386c">Report was last executed on 12/30/2009 1:18 AM.&nbsp; 152 rows. 138 rows filtered out. Total elapsed 217 ms.</div>
  <div class="t" style="left:37.7px;top:271.7px;font-size:8.2px;font-weight:bold;color:#15386c">Data is filterd by: Description contains water...</div>
  <div class="t" style="left:38.5px;top:295px;font-size:8.5px;color:#40608e">Drag a column header here to group by that column.</div>
  <!-- context menu -->
  <div class="a" style="left:312.5px;top:323.5px;width:112px;height:90px;background:#f7f8fa;border:1px solid #a3acb8;box-shadow:1.5px 1.5px 1.5px rgba(90,100,120,0.35)"></div>
  <div class="a" style="left:313.5px;top:324.5px;width:16px;height:88px;background:#eceef2;border-right:1px solid #dfe2e8"></div>
  <div class="a" style="left:333px;top:377px;width:90px;height:1px;background:#d8dce2"></div>
  <div class="a" style="left:333px;top:395.5px;width:90px;height:1px;background:#d8dce2"></div>
  <div class="t" style="left:334.4px;top:329.00px;font-size:8.7px;transform:scaleX(.93);transform-origin:0 0;color:#2c3e6c">Sort</div>
  <div class="t" style="left:334.4px;top:346.00px;font-size:8.7px;transform:scaleX(.93);transform-origin:0 0;color:#2c3e6c">Group By</div>
  <div class="t" style="left:334.4px;top:362.80px;font-size:8.7px;transform:scaleX(.93);transform-origin:0 0;color:#2c3e6c">Filter</div>
  <div class="t" style="left:334.4px;top:381.80px;font-size:8.7px;transform:scaleX(.93);transform-origin:0 0;color:#2c3e6c">Column Chooser</div>
  <div class="t" style="left:334.4px;top:400.80px;font-size:8.7px;transform:scaleX(.95);transform-origin:0 0;color:#9aa0aa">Drill Down Reports</div>
  <svg class="a" style="left:415.5px;top:402.5px" width="4" height="6"><path d="M0.5 0.3 V5.5 L3.5 2.9 Z" fill="#555"/></svg>
  <svg class="a" style="left:313px;top:324px" width="18" height="90" viewBox="0 0 18 90">
    <path d="M5 5 H9 L5 11 H9" stroke="#6a7080" stroke-width="0.9" fill="none"/>
    <path d="M12.5 4 V13 M10.5 10.5 L12.5 13.5 L14.5 10.5" stroke="#202428" stroke-width="1.1" fill="none"/>
    <rect x="3.5" y="22" width="5.5" height="4.5" fill="#a8c0e4" stroke="#5a78b0" stroke-width="0.7"/>
    <rect x="8.5" y="26.5" width="5.5" height="4.5" fill="#a8c0e4" stroke="#5a78b0" stroke-width="0.7"/>
    <path d="M6 26.5 V28.8 H8.5" stroke="#5a78b0" stroke-width="0.6" fill="none"/>
    <path d="M3 41 L5.5 44 V47.5 M8 41 L5.5 44" stroke="#202428" stroke-width="1.1" fill="none"/><path d="M9.5 42 H14 M9.5 44.5 H14 M9.5 47 H14" stroke="#202428" stroke-width="0.8" fill="none"/>
    <rect x="3" y="60.5" width="6.5" height="6.5" fill="#c8d8ee" stroke="#5a78b0" stroke-width="0.7"/>
    <rect x="7" y="57" width="6.5" height="6.5" fill="#7aa2dc" stroke="#3a62a8" stroke-width="0.7"/>
    <path d="M8.5 62 L12 58.5 M10 58.5 H12 V60.5" stroke="#fff" stroke-width="0.8" fill="none"/>
    <path d="M3.5 77 H13 V86 H3.5 Z M6 77 V86 M9.5 77 V86" stroke="#a8aaae" stroke-width="1" fill="#d4d6da"/>
  </svg>
  <div class="a" style="left:0;top:0;width:1px;height:540px;background:#e8f0fa;opacity:.8"></div>
  <div class="a" style="left:722px;top:0;width:1px;height:540px;background:#f4f8fd;opacity:.9"></div>
  <!-- cursor -->
  <svg class="a" style="left:312px;top:323px" width="12" height="17" viewBox="0 0 12 17"><path d="M0.6 0.6 V13.2 L3.6 10.4 L5.8 15.6 L7.8 14.7 L5.7 9.7 H9.8 Z" fill="#fff" stroke="#111" stroke-width="1"/></svg>
</div>
</body></html>
